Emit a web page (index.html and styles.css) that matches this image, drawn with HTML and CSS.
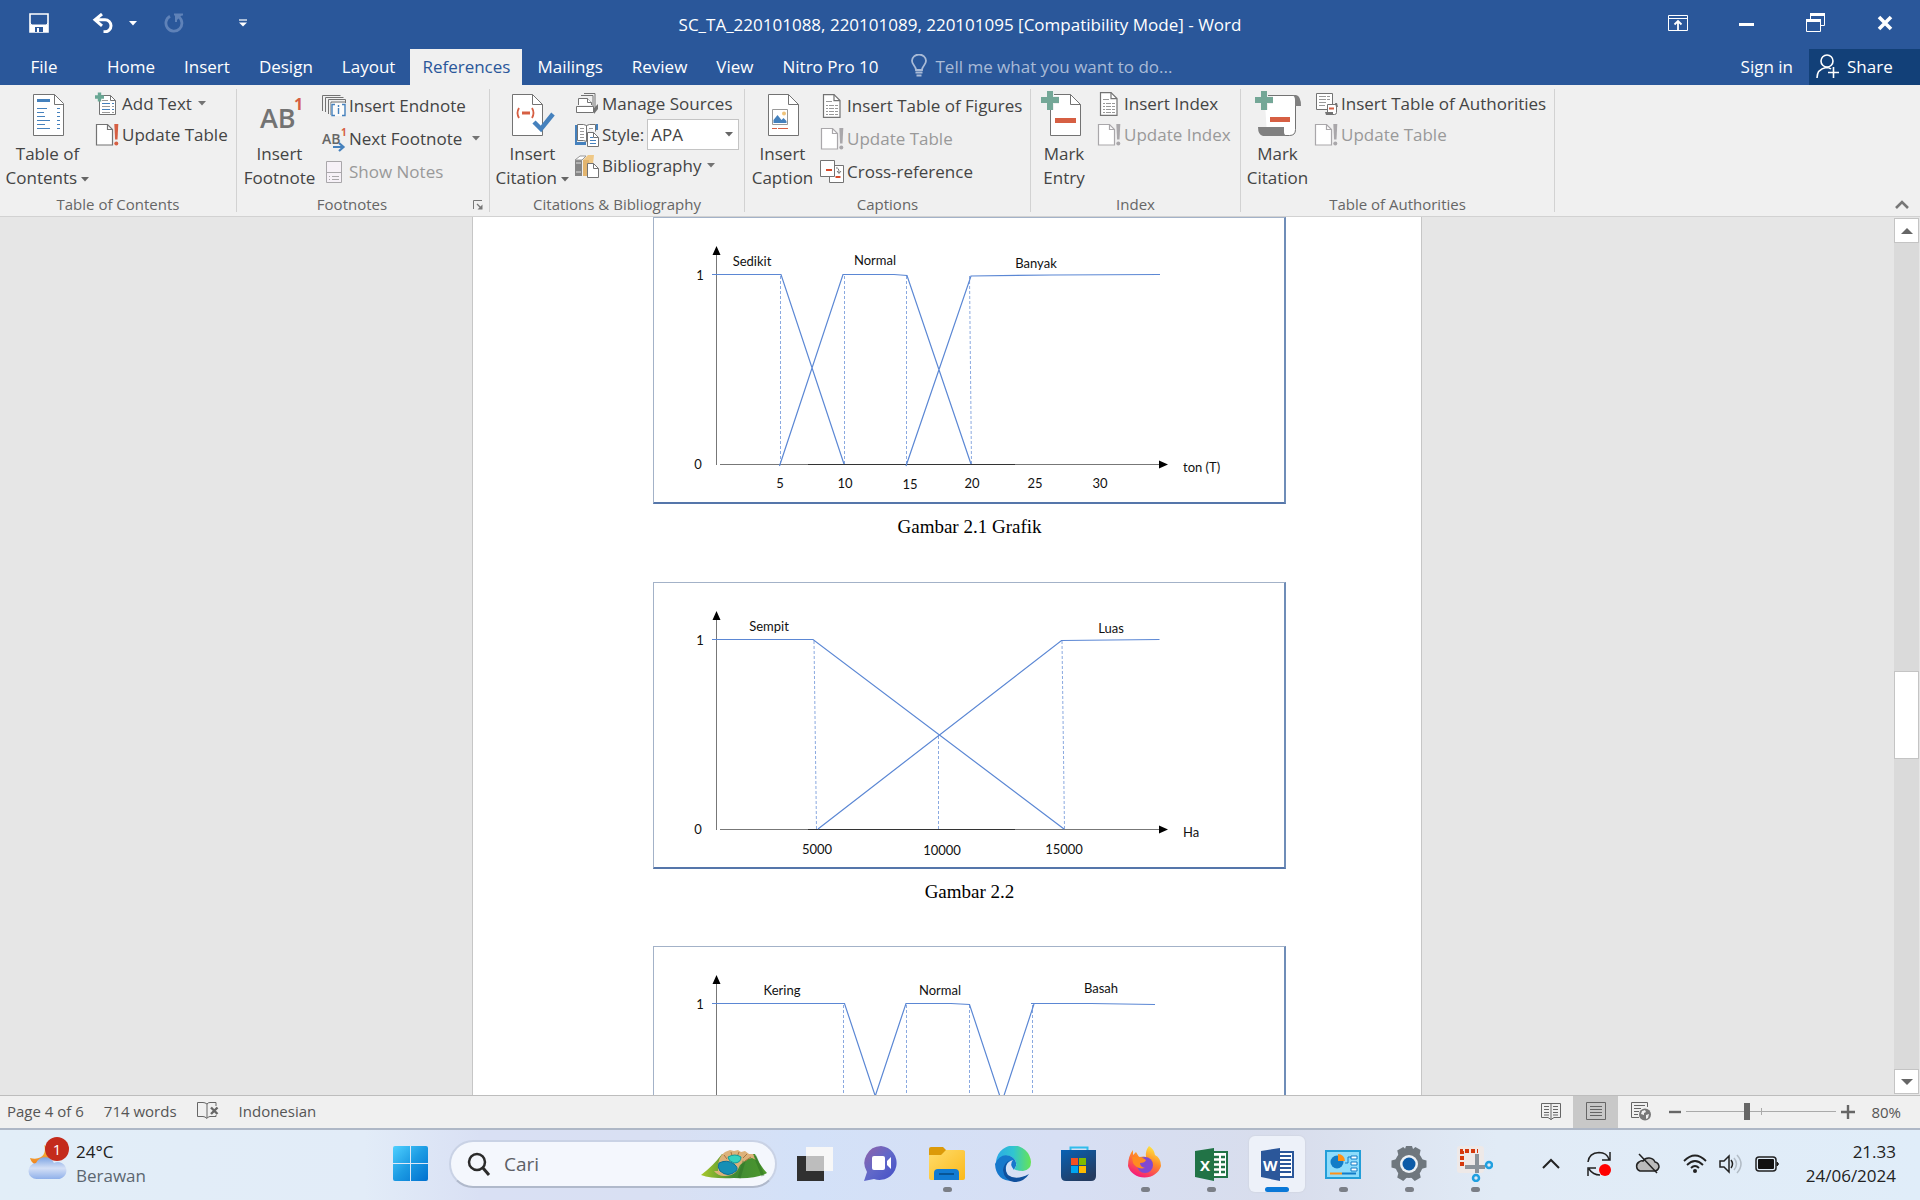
FILE: index.html
```html
<!DOCTYPE html>
<html lang="en">
<head>
<meta charset="utf-8">
<title>SC_TA_220101088, 220101089, 220101095 [Compatibility Mode] - Word</title>
<link rel="stylesheet" href="styles.css">
</head>
<body>
<svg class="defs" width="0" height="0" aria-hidden="true">
  <symbol id="caret" viewBox="0 0 8 5"><path d="M0 0h8L4 4.500z" fill="currentColor"/></symbol>
  <symbol id="update" viewBox="0 0 24 24">
    <path class="sheet" d="M1.500 1.500h11l5 5v15.500h-16z" stroke-width="1.200"/><path d="M12.500 1.500v5h5" fill="none" stroke="currentColor" stroke-width="1.200"/>
    <path class="bang" d="M19.300 1h4l-.8 15.500h-2.400z"/><circle class="bang" cx="21.300" cy="20.600" r="2"/>
  </symbol>
  <symbol id="lines-doc" viewBox="0 0 24 24">
    <path d="M3.500.6h10.500l6 6v16.800H3.500z" fill="#fff" stroke="#737373" stroke-width="1.200"/><path d="M14 .6v6h6" fill="none" stroke="#737373" stroke-width="1.200"/>
    <path d="M6 7.500h6M6 11.500h2m1 0h5m1 0h3M6 14.500h2m1 0h5m1 0h3M6 17.500h2m1 0h5m1 0h3M6 20.500h2m1 0h5m1 0h3" stroke="#999" fill="none"/>
  </symbol>
</svg>
<div class="app">
  <header class="titlebar">
    <div class="quick">
      <button class="q-save" aria-label="Save"><svg width="20" height="20"><path d="M1 1h18v18H1z" fill="none" stroke="#fff" stroke-width="1.600"/><path d="M1 12h18v7H1z" fill="#fff"/><path d="M1 11l2 2h14l2-2v-1H1z" fill="#fff"/><path d="M2 2h16v8.500l-1 1H3l-1-1z" fill="#2a579a"/><path d="M6 14h8v5H6z" fill="#2a579a"/><path d="M8 15h2v4H8z" fill="#fff"/></svg></button>
      <button class="q-undo" aria-label="Undo"><svg width="22" height="20"><path d="M10 1L3 6.800l7 6M3 6.800h10a6 6 0 0 1 0 12h-1.500" fill="none" stroke="#fff" stroke-width="3"/></svg></button>
      <button class="q-caret" aria-label="Undo list"><svg width="8" height="5"><use href="#caret"/></svg></button>
      <button class="q-redo" aria-label="Redo"><svg width="20" height="20"><path d="M6 3.200A8 8 0 1 0 15 4" fill="none" stroke="#5f82b8" stroke-width="2.800"/><path d="M10 1.500h9M12 1v8" stroke="#5f82b8" stroke-width="2" fill="none"/><path d="M11 1h8l-8 8z" fill="#5f82b8"/></svg></button>
      <button class="q-more" aria-label="Customize toolbar"><svg width="8" height="8"><path d="M0 1h8" stroke="#fff" stroke-width="1.200"/><path d="M0 3.500h8L4 7.500z" fill="#fff"/></svg></button>
    </div>
    <h1 class="doc-title">SC_TA_220101088, 220101089, 220101095 [Compatibility Mode] - Word</h1>
    <div class="window-buttons">
      <button aria-label="Ribbon display"><svg width="20" height="16"><path d="M.5.5h19v15H.5zM.5 3.500h19" fill="none" stroke="#fff"/><path d="M10 15V6M6.500 9.500L10 6l3.500 3.500" fill="none" stroke="#fff" stroke-width="1.800"/></svg></button>
      <button aria-label="Minimize"><svg width="16" height="8"><path d="M0 5.500h15" stroke="#fff" stroke-width="3"/></svg></button>
      <button aria-label="Restore"><svg width="20" height="20"><path d="M4.500 6V1.500h14v11H15" fill="none" stroke="#fff"/><path d="M4 0h15v3H4z" fill="#fff"/><path d="M.5 7h14v11.500H.5z" fill="none" stroke="#fff"/><path d="M0 6h15v3H0z" fill="#fff"/></svg></button>
      <button aria-label="Close"><svg width="16" height="16"><path d="M2 2l12 12M14 2L2 14" stroke="#fff" stroke-width="3.600"/></svg></button>
    </div>
  </header>

  <nav class="tabs">
    <button class="tab file">File</button>
    <button class="tab">Home</button>
    <button class="tab">Insert</button>
    <button class="tab">Design</button>
    <button class="tab">Layout</button>
    <button class="tab active">References</button>
    <button class="tab">Mailings</button>
    <button class="tab">Review</button>
    <button class="tab">View</button>
    <button class="tab">Nitro Pro 10</button>
    <label class="tell"><svg width="16" height="24"><path d="M5 16c0-4-4-5-4-9.200a7 6.300 0 0 1 14 0C15 11 11 12 11 16z" fill="none" stroke="#a9bbd7" stroke-width="1.800"/><path d="M4.500 18.500h7M5.500 21.500h5" stroke="#a9bbd7" stroke-width="2"/></svg><input type="text" aria-label="Tell me" placeholder="Tell me what you want to do..."></label>
    <button class="tab signin">Sign in</button>
    <button class="share"><svg width="24" height="25"><circle cx="11" cy="7" r="6" fill="none" stroke="#fff" stroke-width="1.600"/><path d="M1 24c0-6 4-9.500 9-10.500 3 0 4 .5 5 1.500M17.500 13v11M12 18.500h11" fill="none" stroke="#fff" stroke-width="1.600"/></svg>Share</button>
  </nav>

  <section class="ribbon" aria-label="References">
    <div class="group g-toc">
      <div class="tools">
        <button class="big"><svg width="46" height="44"><path d="M8.500 1.500h21l9 9v32h-30z" fill="#fff" stroke="#737373"/><path d="M29.500 1.500v10h9" fill="none" stroke="#737373"/><path d="M12 7.500h13" stroke="#4581bd" stroke-width="3"/><path d="M12 15.500h10M12 19.500h7M12 23.500h8M12 27.500h13M12 31.500h8M12 35.500h13M32 15.500h3M32 19.500h3M32 23.500h3M32 27.500h3M32 31.500h3M32 35.500h3" stroke="#4581bd" stroke-width="1.200"/></svg><span>Table of</span><span>Contents <svg class="caret" width="8" height="5"><use href="#caret"/></svg></span></button>
        <div class="stack">
          <button class="small"><svg width="24" height="24"><path d="M4.500 3.500h11l5 5v14h-16z" fill="#fff" stroke="#737373"/><path d="M15.500 3.500v5h5" fill="none" stroke="#737373"/><path d="M7 8.500h6" stroke="#999"/><path d="M7 11.500h8m2 0h2M7 17.500h8m2 0h2" stroke="#4581bd"/><path d="M7 14.500h8m2 0h2M7 20.500h8m2 0h2" stroke="#999"/><path d="M0 5h9M4.500 .5v9" stroke="#69a794" stroke-width="3.400"/></svg>Add Text<svg class="caret" width="8" height="5"><use href="#caret"/></svg></button>
          <button class="small"><svg class="live" width="24" height="24"><use href="#update"/></svg>Update Table</button>
        </div>
      </div>
      <h2>Table of Contents</h2>
    </div>

    <div class="group g-foot">
      <div class="tools">
        <button class="big"><svg width="46" height="44"><text x="3" y="35" class="ab">AB</text><text x="37" y="17" class="one">1</text></svg><span>Insert</span><span>Footnote</span></button>
        <div class="stack three">
          <button class="small"><svg width="24" height="24"><path d="M.5 17V1.500h18M3.500 18V3.500h18M6.500 20V5.500h17V9" fill="none" stroke="#737373"/><path d="M9 21V8h14" fill="none" stroke="#737373"/><path d="M9 9h14v13H9z" fill="#fff" opacity=".7"/><path d="M13 10.500h-3v11h3M20 10.500h3v11h-3M16.500 14v6M16.500 11v2" fill="none" stroke="#4581bd" stroke-width="1.400"/></svg>Insert Endnote</button>
          <button class="small"><svg width="24" height="24"><text x="0" y="17" class="ab-s">AB</text><text x="19" y="9" class="one-s">1</text><path d="M11 20h10M17 16l4.500 4-4.500 4" fill="none" stroke="#4581bd" stroke-width="2.200"/></svg>Next Footnote<svg class="caret far" width="8" height="5"><use href="#caret"/></svg></button>
          <button class="small" disabled><svg width="24" height="24"><path d="M4.500 1.500h15v21h-15z" fill="#f6f1f7" stroke="#a9a7aa"/><path d="M4.500 12.500h15M7 16.500h1m2 0h7M7 19.500h1m2 0h7" stroke="#a9a7aa"/></svg>Show Notes</button>
        </div>
      </div>
      <h2>Footnotes</h2>
      <button class="launcher" aria-label="Footnote settings"><svg width="10" height="10"><path d="M.5 9V.5H9" fill="none" stroke="#777"/><path d="M4 4l4 4" stroke="#777" stroke-width="1.300"/><path d="M9.500 4.500v5h-5z" fill="#777"/></svg></button>
    </div>

    <div class="group g-cite">
      <div class="tools">
        <button class="big"><svg width="46" height="44"><path d="M2.500 1.500h20l10 10v31h-30z" fill="#fff" stroke="#737373"/><path d="M22.500 1.500v10h10" fill="none" stroke="#737373"/><path d="M9 15q-3 5 0 10M22 15q3 5 0 10" fill="none" stroke="#d65f43" stroke-width="1.800"/><path d="M12 20h8" stroke="#d65f43" stroke-width="3"/><path d="M24 29l7 7 12-15" fill="none" stroke="#4581bd" stroke-width="4.500"/></svg><span>Insert</span><span>Citation <svg class="caret" width="8" height="5"><use href="#caret"/></svg></span></button>
        <div class="stack">
          <button class="small"><svg width="24" height="24"><path d="M6 3.500h12v14M9 1.500h11v14" fill="none" stroke="#737373"/><path d="M3.500 13V6.500h9l4 4V13" fill="#fff" stroke="#737373"/><path d="M12.500 6.500v4h4M1.500 14.500h17v6h-17z" fill="#fff" stroke="#737373"/><path d="M19 16l4-4v5l-4 5z" fill="#737373"/></svg>Manage Sources</button>
          <div class="small"><svg width="24" height="24"><path d="M0 2h2v17h9v3H0zM21 1h2v6h-2z" fill="#4581bd"/><path d="M2.500 1.500h6l3 1 3-1h6v7M11.500 2.500v16l-3-1h-6v-16" fill="#fff" stroke="#737373"/><path d="M5 5.500h4M5 8.500h4M5 11.500h4M5 14.500h4M14 5.500h4" stroke="#999"/><path d="M12.500 9.500h6l5 5v9h-11z" fill="#fff" stroke="#737373"/><path d="M18.500 9.500v5h5" fill="none" stroke="#737373"/><path d="M15 14.500h3M15 17.500h6M15 20.500h6" stroke="#4581bd"/></svg><label for="style">Style:</label><span class="select"><select id="style"><option>APA</option></select><svg class="caret" width="8" height="5"><use href="#caret"/></svg></span></div>
          <button class="small"><svg width="24" height="24"><path d="M0 6h7v16H0z" fill="#858585"/><path d="M0 6l5-4h6L7 6z" fill="#fff" stroke="#999"/><path d="M8 6h6v16H8z" fill="#e3b56f"/><path d="M8 6l5-5h6l-1 9h-4V6z" fill="#efc886"/><path d="M1 9h5M1 18h5" stroke="#ddd"/><path d="M12.500 9.500h6l5 5v9h-11z" fill="#fff" stroke="#737373"/><path d="M18.500 9.500v5h5" fill="none" stroke="#737373"/></svg>Bibliography<svg class="caret" width="8" height="5"><use href="#caret"/></svg></button>
        </div>
      </div>
      <h2>Citations &amp; Bibliography</h2>
    </div>

    <div class="group g-cap">
      <div class="tools">
        <button class="big"><svg width="46" height="44"><path d="M8.500 1.500h20l10 10v31h-30z" fill="#fff" stroke="#737373"/><path d="M28.500 1.500v10h10" fill="none" stroke="#737373"/><path d="M12.500 16.500h15v15h-15z" fill="#fff" stroke="#999"/><path d="M13.500 30v-3l4-5 4 5 2-2 3 3v2z" fill="#4581bd"/><circle cx="24" cy="20.500" r="2" fill="#efc37a"/><path d="M12 35.500h5m1 0h10" stroke="#d65f43"/></svg><span>Insert</span><span>Caption</span></button>
        <div class="stack three">
          <button class="small"><svg width="24" height="24"><use href="#lines-doc"/></svg>Insert Table of Figures</button>
          <button class="small" disabled><svg width="24" height="24"><use href="#update"/></svg>Update Table</button>
          <button class="small"><svg width="24" height="24"><path d="M10.500 5.500h13v17h-14V5.500" fill="#fff" stroke="#737373"/><path d="M.5.500h14v16H.5z" fill="#fff" stroke="#737373"/><path d="M6 10h6M15.500 17h5" stroke="#d84b2b" stroke-width="2"/><path d="M16 8q3-1 3 5M17 11l2 2.500 2-2.500" fill="none" stroke="#737373"/></svg>Cross-reference</button>
        </div>
      </div>
      <h2>Captions</h2>
    </div>

    <div class="group g-index">
      <div class="tools">
        <button class="big"><svg width="46" height="44"><path d="M9.500 1.500h20l10 10v31h-30z" fill="#fff" stroke="#737373"/><path d="M29.500 1.500v10h10" fill="none" stroke="#737373"/><path d="M14 27.500h21" stroke="#d65f43" stroke-width="5"/><path d="M0 7h18M9-2v19" stroke="#f0f0f0" stroke-width="8"/><path d="M0 7h18M9-2v19" stroke="#74a797" stroke-width="6"/></svg><span>Mark</span><span>Entry</span></button>
        <div class="stack">
          <button class="small"><svg width="24" height="24"><use href="#lines-doc"/></svg>Insert Index</button>
          <button class="small" disabled><svg width="24" height="24"><use href="#update"/></svg>Update Index</button>
        </div>
      </div>
      <h2>Index</h2>
    </div>

    <div class="group g-auth">
      <div class="tools">
        <button class="big"><svg width="46" height="44"><path d="M9.500 2.500h31v34q0 6-6 6H12" fill="#fff" stroke="#737373"/><path d="M39 2h2q5 1 5 11h-6V7q0-4-3-5z" fill="#808080"/><path d="M3 34h26v5q0 3 3 4H8q-5-1-5-9z" fill="#808080"/><path d="M15 26.500h20" stroke="#d65f43" stroke-width="5"/><path d="M0 7h18M9-2v19" stroke="#f0f0f0" stroke-width="8"/><path d="M0 7h18M9-2v19" stroke="#74a797" stroke-width="6"/></svg><span>Mark</span><span>Citation</span></button>
        <div class="stack">
          <button class="small"><svg width="24" height="24"><path d="M2.500 1.500h16v16h-16z" fill="#fff" stroke="#737373"/><path d="M5 4.500h7m1 0h3M5 7.500h7m1 0h3M5 10.500h7M5 13.500h6" stroke="#999"/><path d="M13.500 12.500h9v8q0 2-2 2h-7z" fill="#fff" stroke="#737373"/><path d="M21 11h2l1 4h-2zM11 20h8v3h-7z" fill="#737373"/><path d="M15 16.500h5" stroke="#d65f43" stroke-width="2"/></svg>Insert Table of Authorities</button>
          <button class="small" disabled><svg width="24" height="24"><use href="#update"/></svg>Update Table</button>
        </div>
      </div>
      <h2>Table of Authorities</h2>
    </div>
    <button class="collapse" aria-label="Collapse ribbon"><svg width="14" height="9"><path d="M1 8l6-6 6 6" fill="none" stroke="#777" stroke-width="2.600"/></svg></button>
  </section>

  <main class="workspace">
    <div class="canvas">
      <article class="page">
        <figure>
          <svg class="chart" viewBox="0 0 630 284">
            <g class="axis"><path d="M62.500 34v213"/><path d="M66 246.500h440"/><path class="dark" d="M154 246.500h207"/><path class="head" d="M58.500 37h8l-4-9zM505 242.500v8l9-4z"/></g>
            <path class="drop" d="M126.500 58v188M190.500 58v188M252.500 58v188M315.500 58l2 188"/>
            <path class="line" d="M58 56.500h69L190 246M125.500 248L189 56.500h51l13 1L317 246M252 248l65-190 81-1 108-.5"/>
            <g class="mid"><text x="98" y="48">Sedikit</text><text x="221" y="47">Normal</text><text x="382" y="50">Banyak</text><text x="46" y="62">1</text><text x="44" y="251">0</text>
            <text x="126" y="270">5</text><text x="191" y="270">10</text><text x="256" y="271">15</text><text x="318" y="270">20</text><text x="381" y="270">25</text><text x="446" y="270">30</text></g><text x="529" y="254">ton (T)</text>
          </svg>
          <figcaption>Gambar 2.1 Grafik</figcaption>
        </figure>
        <figure>
          <svg class="chart" viewBox="0 0 630 284">
            <g class="axis"><path d="M62.500 34v213"/><path d="M66 246.500h440"/><path class="dark" d="M154 246.500h207"/><path class="head" d="M58.500 37h8l-4-9zM505 242.500v8l9-4z"/></g>
            <path class="drop" d="M160 58l2.500 188M284.500 153v93M408 58l2.500 188"/>
            <path class="line" d="M58 56.500h101L410 246M164 246L407.500 57.500l98-1"/>
            <g class="mid"><text x="115" y="48">Sempit</text><text x="457" y="50">Luas</text><text x="46" y="62">1</text><text x="44" y="251">0</text>
            <text x="163" y="271">5000</text><text x="288" y="272">10000</text><text x="410" y="271">15000</text></g><text x="529" y="254">Ha</text>
          </svg>
          <figcaption>Gambar 2.2</figcaption>
        </figure>
        <figure>
          <svg class="chart" viewBox="0 0 630 284">
            <g class="axis"><path d="M62.500 34v213"/><path d="M66 246.500h440"/><path class="head" d="M58.500 37h8l-4-9zM505 242.500v8l9-4z"/></g>
            <path class="drop" d="M189.500 58v188M252.500 58v188M315.500 58v188M378.500 58v188"/>
            <path class="line" d="M58 56.500h132.500L253.500 246M189 246l63-189.500h45l18.500 1L378 246M318 246L380 57M377 56.500h60l64 1"/>
            <g class="mid"><text x="128" y="48">Kering</text><text x="286" y="48">Normal</text><text x="447" y="46">Basah</text><text x="46" y="62">1</text></g>
          </svg>
        </figure>
      </article>
    </div>
    <div class="scrollbar">
      <button aria-label="Scroll up"><svg width="12" height="6"><path d="M0 6l6-6 6 6z" fill="#666"/></svg></button>
      <div class="track"><div class="thumb"></div></div>
      <button aria-label="Scroll down"><svg width="12" height="6"><path d="M0 0h12L6 6z" fill="#666"/></svg></button>
    </div>
  </main>

  <footer class="status">
    <button>Page 4 of 6</button>
    <button>714 words</button>
    <button aria-label="Proofing"><svg width="22" height="18"><path d="M10 2q-2-1.500-4-1.500H.5v14H6q2 0 4 2 1-2 3-2h6V13M10 2v14M10 2q1-1.500 3-1.500h6V4" fill="none" stroke="#666"/><path d="M14 5.500l6.500 6.500M20.500 5.500L14 12" stroke="#666" stroke-width="2.400"/></svg></button>
    <button>Indonesian</button>
    <div class="views">
      <button aria-label="Read mode"><svg width="20" height="18"><path d="M10 1.500H.5v14H7l3 2 3-2h6.500v-14zM10 1v17" fill="none" stroke="#666"/><path d="M3 4.500h5M3 7.500h5M3 10.500h5M3 13h5M12 4.500h5M12 7.500h5M12 10.500h5M12 13h5" stroke="#666"/></svg></button>
      <button class="on" aria-label="Print layout"><svg width="20" height="18"><path d="M.5.500h19v17H.5zM4 4.500h12M4 7.500h12M4 10.500h12M4 13.500h12" fill="none" stroke="#666"/></svg></button>
      <button aria-label="Web layout"><svg width="20" height="20"><path d="M16.500 6V1.500H.5v15H8" fill="none" stroke="#666"/><path d="M3 4.500h11M3 7.500h7M3 10.500h5M3 13.500h4" stroke="#666"/><circle cx="14" cy="13.500" r="6" fill="#777"/><path d="M11 10l3-1 1 2-2 1v2l-3-1zM15 14l3-1-1 4-2 1z" fill="#f0f0f0"/></svg></button>
    </div>
    <div class="zoom">
      <button aria-label="Zoom out"><svg width="12" height="14"><path d="M0 7h12" stroke="#666" stroke-width="2.400"/></svg></button>
      <input type="range" min="0" max="100" value="40" aria-label="Zoom">
      <button aria-label="Zoom in"><svg width="14" height="14"><path d="M0 7h14M7 0v14" stroke="#666" stroke-width="2.400"/></svg></button>
      <button class="percent">80%</button>
    </div>
  </footer>

  <footer class="taskbar">
    <button class="weather">
      <span class="w-icon"><svg width="40" height="40"><defs><linearGradient id="moon" x2="0" y2="1"><stop stop-color="#f6c84b"/><stop offset="1" stop-color="#f07c19"/></linearGradient><linearGradient id="cloud" x2="0" y2="1"><stop stop-color="#7da4e3"/><stop offset=".5" stop-color="#d4e0f6"/><stop offset="1" stop-color="#8fb0ea"/></linearGradient></defs><path d="M16 1C19 9 14 17 2 14c2 8 12 10 18 6L28 8z" fill="url(#moon)"/><path d="M9 35a8 8 0 0 1-1-16 10 10 0 0 1 18 0 8.500 8.500 0 1 1 3 16z" fill="url(#cloud)"/></svg><b>1</b></span>
      <span class="w-text"><span>24°C</span><small>Berawan</small></span>
    </button>
    <div class="apps">
      <button class="app-btn start" aria-label="Start"><svg width="36" height="36"><defs><linearGradient id="win" x2="1" y2="1"><stop stop-color="#4fd0ff"/><stop offset=".5" stop-color="#1c9be3"/><stop offset="1" stop-color="#0070cf"/></linearGradient></defs><path d="M2 0h15v17H0V2q0-2 2-2zM18 0h15q2 0 2 2v15H18zM0 18h17v17H2q-2 0-2-2zM18 18h17v15q0 2-2 2H18z" fill="url(#win)"/></svg></button>
      <label class="search"><svg width="24" height="24"><circle cx="10" cy="10" r="8" fill="none" stroke="#2b2b2b" stroke-width="2.500"/><path d="M16 16l6 7" stroke="#2b2b2b" stroke-width="3"/></svg><input type="text" aria-label="Cari" placeholder="Cari"><svg width="66" height="30"><defs><linearGradient id="hill"><stop stop-color="#a9c82c"/><stop offset=".5" stop-color="#3f8a35"/><stop offset="1" stop-color="#4d982c"/></linearGradient></defs><path d="M0 26Q12 17 21 5l33 0q5 12 12 19-10 6-33 5-22 1-33-3z" fill="url(#hill)"/><path d="M17 22Q16 8 24 3l5-2 4 1 4-1 3 2 4-1 4 3 4 0 3 6-4-2-4 1-8 6q-4 12-16 11-6 0-10-5z" fill="#dcb27a"/><path d="M23 6l3 4M30 3l1 4M38 3l-2 5M46 5l-4 4M50 8l-6 4" stroke="#a87443"/><path d="M18 14q8-4 15 1 5 4 2 7-8 7-16 0-3-4-1-8z" fill="#168fb5" stroke="#0a7197"/><path d="M27 8q7-4 13 0 0 6-7 6-6-2-6-6z" fill="#37d2be" stroke="#109b9d"/><path d="M43 12l-5 17M54 7l8 20" stroke="#286b23" stroke-width="3" opacity=".4"/></svg></label>
      <button class="app-btn" aria-label="Task view"><svg width="36" height="36"><path d="M0 10h27v25H0z" fill="#303030"/><path d="M9 1h27v24H9z" fill="#f7f7f7"/><path d="M9 10h18v15H9z" fill="#bdbdbd"/></svg></button>
      <button class="app-btn" aria-label="Chat"><svg width="36" height="36"><defs><linearGradient id="chat" x2="1" y2="1"><stop stop-color="#9362a7"/><stop offset=".5" stop-color="#6068c9"/><stop offset="1" stop-color="#424dc6"/></linearGradient></defs><path d="M18 0a17 17 0 1 1-7 33l-10 2 3-9A17 17 0 0 1 18 0z" fill="url(#chat)"/><rect x="9" y="10" width="13" height="14" rx="2" fill="#fff"/><path d="M24 15l4-4v12l-4-4z" fill="#fff"/></svg></button>
      <button class="app-btn run" aria-label="File Explorer"><svg width="36" height="36"><defs><linearGradient id="fold" x2="1" y2="1"><stop stop-color="#ffdc6b"/><stop offset="1" stop-color="#fbb91b"/></linearGradient></defs><path d="M2 1h12l4 4h16q2 0 2 2v20H0V3q0-2 2-2z" fill="#dc9a09"/><path d="M0 9h12l5-5h17q2 0 2 2v26q0 2-2 2H2q-2 0-2-2z" fill="url(#fold)"/><path d="M5 34V27q0-4 4-4h17q4 0 4 4v7z" fill="#117bd3"/><path d="M10 28h15" stroke="#075596" stroke-width="2"/></svg></button>
      <button class="app-btn" aria-label="Edge"><svg width="36" height="36"><defs><linearGradient id="e1"><stop stop-color="#2ba9e7"/><stop offset=".5" stop-color="#31c5d0"/><stop offset="1" stop-color="#66e455"/></linearGradient></defs><path d="M1 18A17.500 17.500 0 0 1 36 16q0 8-8 9-6 0-9-2 4-3 1-9Q11 4 1 18z" fill="url(#e1)"/><path d="M0 18Q5 7 15 10q7 3 6 10-2 3-2 4-5-6-1-10-11 3-5 17 3 4 7 4Q1 36 0 18z" fill="#1678cc"/><path d="M15 14q-8 7-2 15 8 6 21-1-5 8-15 8-10-2-11-12 1-7 7-10z" fill="#10509d"/></svg></button>
      <button class="app-btn" aria-label="Store"><svg width="36" height="36"><defs><linearGradient id="store" x2=".6" y2="1"><stop stop-color="#0762b5"/><stop offset="1" stop-color="#243b60"/></linearGradient></defs><path d="M9.500 6V1.500h17V6" fill="none" stroke="#32bdec" stroke-width="2"/><path d="M0 4h35v26q0 5-5 5H5q-5 0-5-5z" fill="url(#store)"/><path d="M10 12h7v7h-7z" fill="#f25022"/><path d="M18 12h7v7h-7z" fill="#7fba00"/><path d="M10 20h7v7h-7z" fill="#00a4ef"/><path d="M18 20h7v7h-7z" fill="#ffb900"/></svg></button>
      <button class="app-btn run" aria-label="Firefox"><svg width="36" height="36"><defs><linearGradient id="fox" x1=".8" y1="0" x2=".3" y2="1"><stop stop-color="#fff044"/><stop offset=".45" stop-color="#ff8b28"/><stop offset="1" stop-color="#f5147e"/></linearGradient></defs><path d="M22 0q5 3 6 9 6 3 6 11A17 15 0 0 1 1 20Q1 10 6 4v5l3-3 3 5q6-1 7 0-1-6 3-11z" fill="url(#fox)"/><circle cx="18" cy="19" r="8" fill="#8049d1"/><path d="M5 11q8-2 14 3-1 3-6 3 0 4 5 5-8 2-12-5z" fill="#ff8b21"/></svg></button>
      <button class="app-btn run" aria-label="Excel"><svg width="36" height="36"><path d="M18 6h16v25H18z" fill="#fff" stroke="#217346" stroke-width="2"/><path d="M21 11h5m2 0h4M21 16h5m2 0h4M21 21h5m2 0h4M21 26h5m2 0h4" stroke="#217346" stroke-width="2.500"/><path d="M2 5l19-3v33L2 31z" fill="#217346"/><text x="7" y="25" class="logo">X</text></svg></button>
      <button class="app-btn run current" aria-label="Word"><svg width="36" height="36"><path d="M18 6h16v25H18z" fill="#fff" stroke="#2b579a" stroke-width="2"/><path d="M21 10h11M21 14h11M21 18h11M21 22h11M21 26h11" stroke="#2b579a" stroke-width="2"/><path d="M2 5l19-3v33L2 31z" fill="#2b579a"/><text x="4" y="25" class="logo">W</text></svg></button>
      <button class="app-btn run" aria-label="Control Panel"><svg width="36" height="36"><rect x="1" y="5" width="34" height="27" fill="#8edcfb" stroke="#239ed8" stroke-width="2"/><circle cx="12" cy="16" r="6.500" fill="#137cc7"/><path d="M13 15V8a7 7 0 0 1 7 7z" fill="#ff9017"/><path d="M20 17h3v-6h4" fill="none" stroke="#137cc7"/><path d="M26 10h6v3h-6zM26 16h6v3h-6zM26 22h6v3h-6z" fill="#fff" stroke="#137cc7"/><path d="M5 27.500h12" stroke="#ff9017" stroke-width="2"/><path d="M17 27.500h14" stroke="#137cc7" stroke-width="2"/></svg></button>
      <button class="app-btn run" aria-label="Settings"><svg width="36" height="36"><g transform="translate(18 18)" fill="#6f777e"><circle r="14"/><path id="tooth" d="M-5-12l2-6h6l2 6z"/><use href="#tooth" transform="rotate(30)"/><path d="M-5-12l1.500-5.500h7L5-12z" transform="rotate(90)"/><path d="M-5-12l1.500-5.500h7L5-12z" transform="rotate(150)"/><path d="M-5-12l1.500-5.500h7L5-12z" transform="rotate(210)"/><path d="M-5-12l1.500-5.500h7L5-12z" transform="rotate(270)"/><path d="M-5-12l1.500-5.500h7L5-12z" transform="rotate(330)"/></g><circle cx="18" cy="18" r="9" fill="#edf1f5"/><circle cx="18" cy="18" r="6.500" fill="#0d5ba7"/></svg></button>
      <button class="app-btn run" aria-label="Snipping Tool"><svg width="36" height="36"><rect width="27" height="27" rx="3" fill="#eee9e8"/><path d="M5 20V5h16" fill="none" stroke="#d6380c" stroke-width="4" stroke-dasharray="4 2"/><path d="M20 8v19M8 21h20" stroke="#8b9299" stroke-width="4"/><circle cx="32" cy="19" r="3" fill="none" stroke="#20a0e0" stroke-width="2.500"/><circle cx="19" cy="32" r="3" fill="none" stroke="#20a0e0" stroke-width="2.500"/></svg></button>
    </div>
    <div class="tray">
      <button aria-label="Hidden icons"><svg width="18" height="12"><path d="M1 10l8-8 8 8" fill="none" stroke="#222" stroke-width="2"/></svg></button>
      <button aria-label="Updates"><svg width="24" height="26"><path d="M1 11Q2 2 12 1.500q8 0 10 7M23 1v8h-8M1 25v-8h8M2 18q4 6 11 6" fill="none" stroke="#222" stroke-width="1.500"/><circle cx="18" cy="19" r="6" fill="#f00"/></svg></button>
      <button aria-label="OneDrive"><svg width="26" height="22"><path d="M6 18a5 5 0 0 1-1-9q2-2 4-1a7 7 0 0 1 12 1q4 1 4 5-1 4-5 4z" fill="#bbb" stroke="#222" stroke-width="1.500"/><path d="M5 1l18 19" stroke="#222" stroke-width="1.500"/></svg></button>
      <span class="net"><svg width="24" height="20" aria-label="Wi-Fi"><path d="M1 7q11-11 22 0M4 11q8-8 16 0M8 14q4-4 8 0" fill="none" stroke="#222" stroke-width="1.800"/><circle cx="12" cy="17" r="2" fill="#222"/></svg><svg width="24" height="20" aria-label="Volume"><path d="M1 7h4l5-5v16l-5-5H1z" fill="none" stroke="#222" stroke-width="1.500"/><path d="M12 6q3 4 0 8" fill="none" stroke="#222" stroke-width="1.500"/><path d="M15 4q5 6 0 12M18 1q8 9 0 18" fill="none" stroke="#b2bcc6" stroke-width="1.500"/></svg><svg width="24" height="20" aria-label="Battery"><rect x="1" y="3" width="20" height="14" rx="3" fill="none" stroke="#222" stroke-width="1.500"/><rect x="3" y="5" width="16" height="10" rx="1" fill="#111"/><path d="M22 8q3 2 0 4z" stroke="#222"/></svg></span>
      <button class="clock"><span>21.33</span><span>24/06/2024</span></button>
    </div>
  </footer>
</div>
</body>
</html>
```
FILE: styles.css
```css
* { box-sizing: border-box; }
body { margin: 0; font-family: "Open Sans", "Noto Sans", sans-serif; font-size: 17px; color: #444; }
button, input, select { font: inherit; color: inherit; margin: 0; padding: 0; border: 0; background: none; }
button { display: flex; align-items: center; justify-content: center; white-space: nowrap; }
button svg, label svg { flex: none; }
h1, h2, figure { margin: 0; font-weight: 400; }
.defs { position: absolute; }
.app { height: 100vh; display: flex; flex-direction: column; overflow: hidden; }
.caret { color: #666; }

/* Title bar */
.titlebar { display: grid; grid-template-columns: 1fr auto 1fr; height: 49px; background: #2a579a; color: #fff; }
.quick, .window-buttons { display: flex; }
.q-save { width: 78px; }
.q-undo { width: 50px; }
.q-caret { width: 10px; }
.q-redo { width: 72px; }
.q-more { width: 66px; }
.quick button { padding-bottom: 4px; }
.q-caret { color: #fff; }
.doc-title { font-size: 17px; line-height: 50px; white-space: nowrap; }
.window-buttons { justify-content: flex-end; padding-right: 1px; }
.window-buttons button { width: 69px; padding-bottom: 4px; }

/* Tabs */
.tabs { display: flex; height: 36px; background: #2a579a; color: #fff; gap: 1px; }
.tab { padding: 0 14px 2px; }
.tab.file { width: 92px; padding: 0 18px 2px 14px; }
.tab.active { background: #f0f0f0; color: #2a579a; padding: 0 12px 2px; }
.tell { flex: 1; display: flex; align-items: center; gap: 8px; padding: 0 0 2px 18px; }
.tell input { flex: 1; min-width: 0; }
.tell input::placeholder { color: #a9bbd7; opacity: 1; }
.tab.signin { padding-right: 15px; }
.share { width: 111px; background: #124078; justify-content: flex-start; gap: 7px; padding: 0 0 2px 7px; }

/* Ribbon */
.ribbon { display: flex; height: 132px; background: #f0f0f0; border-bottom: 1px solid #d2d2d2; }
.group { display: flex; flex-direction: column; justify-content: space-between; flex: none; position: relative; margin: 4px 0; border-right: 1px solid #d2d2d2; }
.tools { display: flex; }
.group h2 { font-size: 15px; line-height: 16px; color: #666; text-align: center; white-space: nowrap; }
.g-toc { width: 237px; }
.g-foot { width: 253px; }
.g-foot h2 { padding-right: 22px; }
.g-cite { width: 255px; }
.g-cap { width: 286px; }
.g-index { width: 210px; }
.g-auth { width: 314px; }
.big { flex-direction: column; justify-content: flex-start; flex: none; width: 85px; padding-top: 4px; line-height: 24px; }
.big > svg { margin-bottom: 5px; overflow: visible; }
.big .caret { vertical-align: middle; }
.g-toc .big { width: 95px; }
.g-cap .big { width: 75px; }
.g-index .big { width: 66px; }
.g-auth .big { width: 73px; }
.stack { display: flex; flex-direction: column; }
.stack.three { padding-top: 1px; }
.small { display: flex; align-items: center; justify-content: flex-start; gap: 3px; height: 31px; padding-bottom: 2px; white-space: nowrap; }
.three .small { height: 33px; }
.small .caret { margin-left: 3px; }
.small .caret.far { margin-left: 7px; }
.small > svg { flex: none; color: #737373; overflow: visible; }
.small:disabled { color: #999; }
.small:disabled > svg { color: #a9a7aa; }
.sheet { fill: #fff; stroke: currentColor; }
.bang { fill: var(--bang, currentColor); }
.live { --bang: #d65f43; }
.select { display: flex; align-items: center; width: 92px; height: 31px; background: #fff; border: 1px solid #c4c4c4; padding-right: 5px; }
.select select { flex: 1; min-width: 0; height: 29px; padding-left: 3px; appearance: none; }
.ab { font-size: 27px; font-weight: 600; fill: #737373; }
.one { font-size: 16px; font-weight: 700; fill: #d65f43; }
.ab-s { font-size: 14px; font-weight: 600; fill: #666; }
.one-s { font-size: 10px; font-weight: 700; fill: #d65f43; }
.launcher { position: absolute; right: 6px; bottom: 2px; }
.collapse { margin: auto 11px 7px auto; }

/* Document */
.workspace { flex: 1; min-height: 0; display: flex; background: #e6e6e6; }
.canvas { flex: 1; overflow: hidden; display: flex; justify-content: center; align-items: flex-start; }
.page { width: 950px; padding: 0 135px 0 180px; background: #fff; border: solid #c6c6c6; border-width: 0 1px; }
figure { height: 364px; }
figure:first-child { height: 365px; }
.chart { display: block; width: 633px; height: 287px; border: 1px solid #a3b2c8; border-right: 2px solid #6f8db8; border-bottom: 2px solid #5576aa; font-family: Lato, "Open Sans", sans-serif; font-size: 13px; }
.chart text { fill: #111; }
.mid { text-anchor: middle; }
.axis path { stroke: #777; fill: none; }
.axis .dark { stroke: #333; }
.axis .head { fill: #000; stroke: none; }
.line { fill: none; stroke: #5b87d4; stroke-width: 1.200; }
.drop { fill: none; stroke: #8aa9e0; stroke-dasharray: 3 2; }
figcaption { font-family: "Liberation Serif", serif; font-size: 19px; line-height: 24px; color: #000; text-align: center; padding-top: 11px; }

.scrollbar { width: 26px; display: flex; flex-direction: column; padding: 1px 1px 1px 0; }
.scrollbar button { height: 25px; background: #fff; border: 1px solid #c4c4c4; }
.track { flex: 1; background: #dadada; padding-top: 428px; }
.thumb { height: 88px; background: #fff; border: 1px solid #c4c4c4; }

/* Status bar */
.status { display: flex; align-items: stretch; height: 33px; padding: 0 19px 0 7px; background: #f0f0f0; border-top: 1px solid #bdbdbd; font-size: 15px; color: #555; gap: 20px; }
.status button { padding-bottom: 2px; }
.views { display: flex; margin-left: auto; }
.views button { width: 45px; }
.views .on { background: #c8c8c8; }
.zoom { display: flex; align-items: center; gap: 5px; margin-left: -14px; padding-bottom: 1px; }
.zoom button { padding: 0; }
.zoom input { appearance: none; width: 150px; height: 17px; background: linear-gradient(#aaa, #aaa) 50% 50% / 1px 7px no-repeat, linear-gradient(#aaa, #aaa) 0 50% / 100% 1px no-repeat; }
.zoom input::-webkit-slider-thumb { appearance: none; width: 6px; height: 17px; background: #666; }
.zoom .percent { margin-left: 11px; }

/* Taskbar */
.taskbar { display: flex; height: 72px; padding: 0 24px 2px 28px; border-top: 2px solid #aeb7c6; background: linear-gradient(90deg, #e2eef8 0, #e2ecf8 19%, #d9e0f4 25%, #d9e0f3 34%, #d3e1f8 42%, #d7dff4 55%, #d8ddec 67%, #e1ebf6 78%, #e0edf9 100%); color: #222; }
.weather { gap: 8px; justify-content: flex-start; width: 355px; }
.w-icon { position: relative; height: 40px; }
.w-icon b { position: absolute; left: 17px; top: -7px; width: 24px; height: 24px; border-radius: 50%; background: #c42b1c; color: #fff; font-size: 15px; line-height: 24px; font-weight: 400; }
.w-text { display: flex; flex-direction: column; align-items: flex-start; line-height: 24px; }
.w-text small { font-size: 17px; color: #5c6670; }
.apps { display: flex; align-items: center; gap: 10px; }
.app-btn { position: relative; width: 56px; height: 56px; border-radius: 6px; }
.app-btn.run::after { content: ""; position: absolute; left: 24px; bottom: 0; width: 9px; height: 5px; border-radius: 3px; background: #7b7f87; }
.app-btn.current { background: #edf1f9; box-shadow: 0 0 1px 1px #d3d8e5; }
.app-btn.current::after { left: 16px; width: 24px; background: #0a78d7; }
.logo { font-size: 15px; font-weight: 700; fill: #fff; }
.search { display: flex; align-items: center; width: 328px; height: 48px; padding: 0 8px 0 16px; border: 2px solid #c9d2e5; border-bottom-color: #b0b9cb; border-radius: 25px; background: #f4f7fd; }
.search input { flex: 1; min-width: 0; padding-left: 13px; font-size: 19px; }
.search input::placeholder { color: #5d6066; opacity: 1; }
.tray { display: flex; align-items: center; margin-left: auto; }
.tray > button { width: 48px; }
.net { display: flex; gap: 12px; padding: 0 12px; }
.tray > .clock { flex-direction: column; align-items: flex-end; width: 105px; line-height: 24px; }
```
